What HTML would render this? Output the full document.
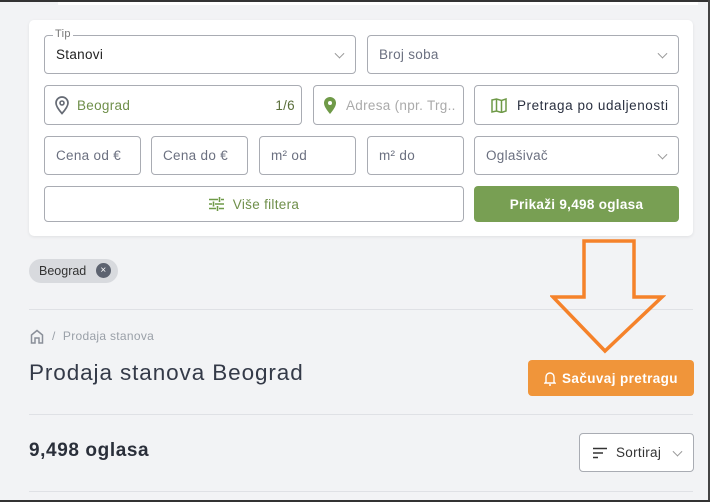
<!DOCTYPE html>
<html><head><style>
*{box-sizing:border-box;margin:0;padding:0}
body{width:710px;height:502px;background:#f2f3f5;font-family:"Liberation Sans",sans-serif;position:relative;overflow:hidden;color:#2c3240;letter-spacing:.3px}
.a{position:absolute}
.in{position:absolute;border:1px solid #a9acb3;border-radius:4px;background:#fff;font-size:13.5px;color:#6b7080;display:flex;align-items:center;padding-left:11px}
.chev{position:absolute;right:12px;top:50%;width:7px;height:7px;border-right:1.3px solid #999;border-bottom:1.3px solid #999;transform:translateY(-70%) rotate(45deg)}
.line{position:absolute;left:29px;width:664px;height:1px;background:#dfe1e5}
</style></head><body>
<div class="a" style="left:0;top:0;width:710px;height:2px;background:#333"></div>
<div class="a" style="left:58px;top:2px;width:640px;height:3px;background:#fff"></div>
<div class="a" style="left:708px;top:0;width:2px;height:502px;background:#444"></div>
<div class="a" style="left:0;top:500px;width:710px;height:2px;background:#333"></div>
<div class="a" style="left:29px;top:20px;width:664px;height:216px;background:#fff;border-radius:5px;box-shadow:0 1px 3px rgba(0,0,0,.08)"></div>
<div class="in" style="left:44px;top:35px;width:312px;height:39px;color:#222">Stanovi<span class="chev"></span></div>
<div class="a" style="left:53px;top:28px;background:#fff;padding:0 2px;font-size:11px;color:#777">Tip</div>
<div class="in" style="left:367px;top:35px;width:312px;height:39px">Broj soba<span class="chev"></span></div>
<div class="in" style="left:44px;top:85px;width:258px;height:40px;color:#6f8f4a;padding-left:32px">Beograd<span style="position:absolute;right:6px;color:#5a6e3a">1/6</span>
<svg class="a" style="left:9px;top:10px" width="16" height="19" viewBox="0 0 16 19"><path d="M8 17.5C4 13 2 10 2 7a6 6 0 0 1 12 0c0 3-2 6-6 10.5z" fill="none" stroke="#666b75" stroke-width="1.7"/><circle cx="8" cy="7" r="2" fill="none" stroke="#666b75" stroke-width="1.6"/></svg></div>
<div class="in" style="left:313px;top:85px;width:151px;height:40px;color:#aaa;padding-left:32px;overflow:hidden;white-space:nowrap">Adresa (npr. Trg..
<svg class="a" style="left:9px;top:10px" width="14" height="19" viewBox="0 0 14 19"><path d="M7 18C3 13 1 10 1 7a6 6 0 0 1 12 0c0 3-2 6-6 11z" fill="#6f9a48"/><circle cx="7" cy="7" r="2" fill="#fff"/></svg></div>
<div class="in" style="left:474px;top:85px;width:205px;height:40px;color:#2a3040;padding-left:42px;letter-spacing:.55px">Pretraga po udaljenosti
<svg class="a" style="left:16px;top:12px" width="16" height="15" viewBox="0 0 16 15"><path d="M1 2l4.5-1 5 1.5L15 1v12l-4.5 1.5-5-1.5L1 14zM5.5 1v12M10.5 2.5v12" fill="none" stroke="#6f9a48" stroke-width="1.5"/></svg></div>
<div class="in" style="left:44px;top:136px;width:97px;height:39px">Cena od €</div>
<div class="in" style="left:151px;top:136px;width:97px;height:39px">Cena do €</div>
<div class="in" style="left:259px;top:136px;width:97px;height:39px">m² od</div>
<div class="in" style="left:367px;top:136px;width:97px;height:39px">m² do</div>
<div class="in" style="left:474px;top:136px;width:205px;height:39px">Oglašivač<span class="chev"></span></div>
<div class="in" style="left:44px;top:186px;width:420px;height:36px;justify-content:center;padding:0;color:#6f8f4a">
<svg width="15" height="14" viewBox="0 0 15 14" style="margin-right:9px"><path d="M0 2.5h9M12 2.5h3M0 7h3M6 7h9M0 11.5h7M10 11.5h5M10.5 0v5M4.5 4.5v5M8.5 9v5" stroke="#6f9a48" stroke-width="1.6"/></svg>Više filtera</div>
<div class="a" style="left:474px;top:186px;width:205px;height:36px;background:#789f53;border-radius:4px;color:#fff;font-size:13.5px;font-weight:bold;display:flex;align-items:center;justify-content:center">Prikaži 9,498 oglasa</div>
<div class="a" style="left:29px;top:259px;width:89px;height:24px;border-radius:12px;background:#d8dade;font-size:12.5px;color:#333;padding:5px 0 0 10px;letter-spacing:0">Beograd</div>
<div class="a" style="left:96px;top:263px;width:15px;height:15px;border-radius:50%;background:#5d6370;color:#fff;font-size:10px;text-align:center;line-height:15px">×</div>
<div class="line" style="top:309px"></div>
<svg class="a" style="left:30px;top:329px" width="14" height="15" viewBox="0 0 14 15"><path d="M1.5 14V6L7 1.5 12.5 6V14H9V9H5v5z" fill="none" stroke="#8a8f99" stroke-width="1.5"/></svg>
<div class="a" style="left:52px;top:329px;font-size:12px;color:#9aa0a8">/ &nbsp;Prodaja stanova</div>
<div class="a" style="left:29px;top:360px;font-size:22.5px;color:#343a48;letter-spacing:.9px">Prodaja stanova Beograd</div>
<div class="a" style="left:528px;top:360px;width:166px;height:36px;background:#f0953a;border-radius:4px;color:#fff;font-size:13.5px;font-weight:bold;display:flex;align-items:center;justify-content:center;letter-spacing:.4px">
<svg width="12" height="15" viewBox="0 0 12 15" style="margin-right:6px"><path d="M2 11V6a4 4 0 0 1 8 0v5l1 1H1zM5 14h2" fill="none" stroke="#fff" stroke-width="1.4"/></svg>Sačuvaj pretragu</div>
<svg class="a" style="left:550px;top:238px" width="116" height="118"><path d="M34 3H84V59H112L55 113 3 59H34z" fill="none" stroke="#f5822a" stroke-width="3.5" stroke-linejoin="miter"/></svg>
<div class="line" style="top:414px"></div>
<div class="a" style="left:29px;top:440px;font-size:19px;font-weight:bold;color:#2a2f3a;letter-spacing:.6px">9,498 oglasa</div>
<div class="a" style="left:579px;top:433px;width:115px;height:39px;background:#fff;border:1px solid #a9acb3;border-radius:4px;font-size:13.5px;color:#333;padding:11px 0 0 36px">Sortiraj<span class="chev" style="right:12px"></span>
<svg class="a" style="left:13px;top:13px" width="14" height="12" viewBox="0 0 14 12"><path d="M0 1.5h14M0 6h10M0 10.5h5" stroke="#333" stroke-width="1.6"/></svg></div>
<div class="line" style="top:491px"></div>
</body></html>
